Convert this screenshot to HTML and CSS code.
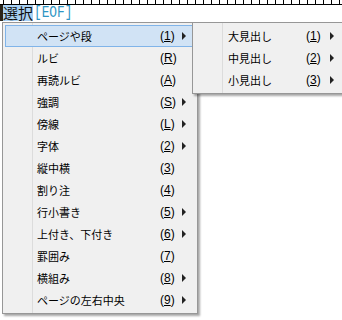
FILE: index.html
```html
<!doctype html>
<html>
<head>
<meta charset='utf-8' />
<title>メニュー</title>
<link rel="stylesheet" href="styles.css">
</head>
<body>
<div class="ruler"></div>
<div class="line"><span class="caret"></span><span class="sel">選択</span><span class="eof">[EOF]</span></div>

<div class="menu main">
	<div class="item active"><span class="label">ページや段</span><span class="key">(<u>1</u>)</span><span class="arrow"></span></div>
	<div class="item"><span class="label">ルビ</span><span class="key">(<u>R</u>)</span><span></span></div>
	<div class="item"><span class="label">再読ルビ</span><span class="key">(<u>A</u>)</span><span></span></div>
	<div class="item"><span class="label">強調</span><span class="key">(<u>S</u>)</span><span class="arrow"></span></div>
	<div class="item"><span class="label">傍線</span><span class="key">(<u>L</u>)</span><span class="arrow"></span></div>
	<div class="item"><span class="label">字体</span><span class="key">(<u>2</u>)</span><span class="arrow"></span></div>
	<div class="item"><span class="label">縦中横</span><span class="key">(<u>3</u>)</span><span></span></div>
	<div class="item"><span class="label">割り注</span><span class="key">(<u>4</u>)</span><span></span></div>
	<div class="item"><span class="label">行小書き</span><span class="key">(<u>5</u>)</span><span class="arrow"></span></div>
	<div class="item"><span class="label">上付き、下付き</span><span class="key">(<u>6</u>)</span><span class="arrow"></span></div>
	<div class="item"><span class="label">罫囲み</span><span class="key">(<u>7</u>)</span><span></span></div>
	<div class="item"><span class="label">横組み</span><span class="key">(<u>8</u>)</span><span class="arrow"></span></div>
	<div class="item"><span class="label">ページの左右中央</span><span class="key">(<u>9</u>)</span><span class="arrow"></span></div>
</div>

<div class="menu sub">
	<div class="item"><span class="label">大見出し</span><span class="key">(<u>1</u>)</span><span class="arrow"></span></div>
	<div class="item"><span class="label">中見出し</span><span class="key">(<u>2</u>)</span><span class="arrow"></span></div>
	<div class="item"><span class="label">小見出し</span><span class="key">(<u>3</u>)</span><span class="arrow"></span></div>
</div>
</body>
</html>
```

FILE: styles.css
```css
*{margin: 0;padding: 0;box-sizing: border-box;}
body{background: #fff;width: 342px;height: 320px;overflow: hidden;position: relative;
	font-family: "Noto Sans CJK JP", sans-serif;color: #000;}

.ruler{height: 5px;border-bottom: 1px solid #000;
	background: repeating-linear-gradient(to right, transparent 0 3px, #000 3px 4px, transparent 4px 8px);}
.line{display: flex;height: 16px;line-height: 16px;font-size: 15px;}
.caret{width: 3px;background: #2b2418;}
.sel{background: #a9d1f3;color: #111;}
.eof{display: inline-block;font-family: "Liberation Mono", monospace;font-size: 16px;color: #2f96c4;
	margin-left: 1px;transform: scaleX(0.8);transform-origin: left center;}

.menu{position: absolute;top: 22px;background: linear-gradient(#dcdcdc,#dcdcdc) 29px 0 / 1px 100% no-repeat, #f0f0f0;
	border: 1px solid #979797;padding: 2px;box-shadow: 2px 2px 2px rgba(0,0,0,0.35);}
.main{left: 2px;width: 196px;}
.sub{left: 192px;width: 150px;border-right-width: 0;padding-right: 0;}

.item{display: grid;height: 22px;align-items: center;border: 1px solid transparent;font-size: 11px;}
.main .item{grid-template-columns: 31px 123px 20px 1fr;}
.sub .item{grid-template-columns: 32px 78px 22px 1fr;}
.item .label{grid-column: 2;}
.item.active{background: #d1e3f5;border-color: #80b4e9;}
.key{font-family: "Liberation Sans", sans-serif;font-size: 12px;}
.key u{text-underline-offset: 1px;}
.arrow{width: 0;height: 0;margin-left: 2px;border-style: solid;border-width: 4px 0 4px 4px;
	border-color: transparent transparent transparent #222;}
```
